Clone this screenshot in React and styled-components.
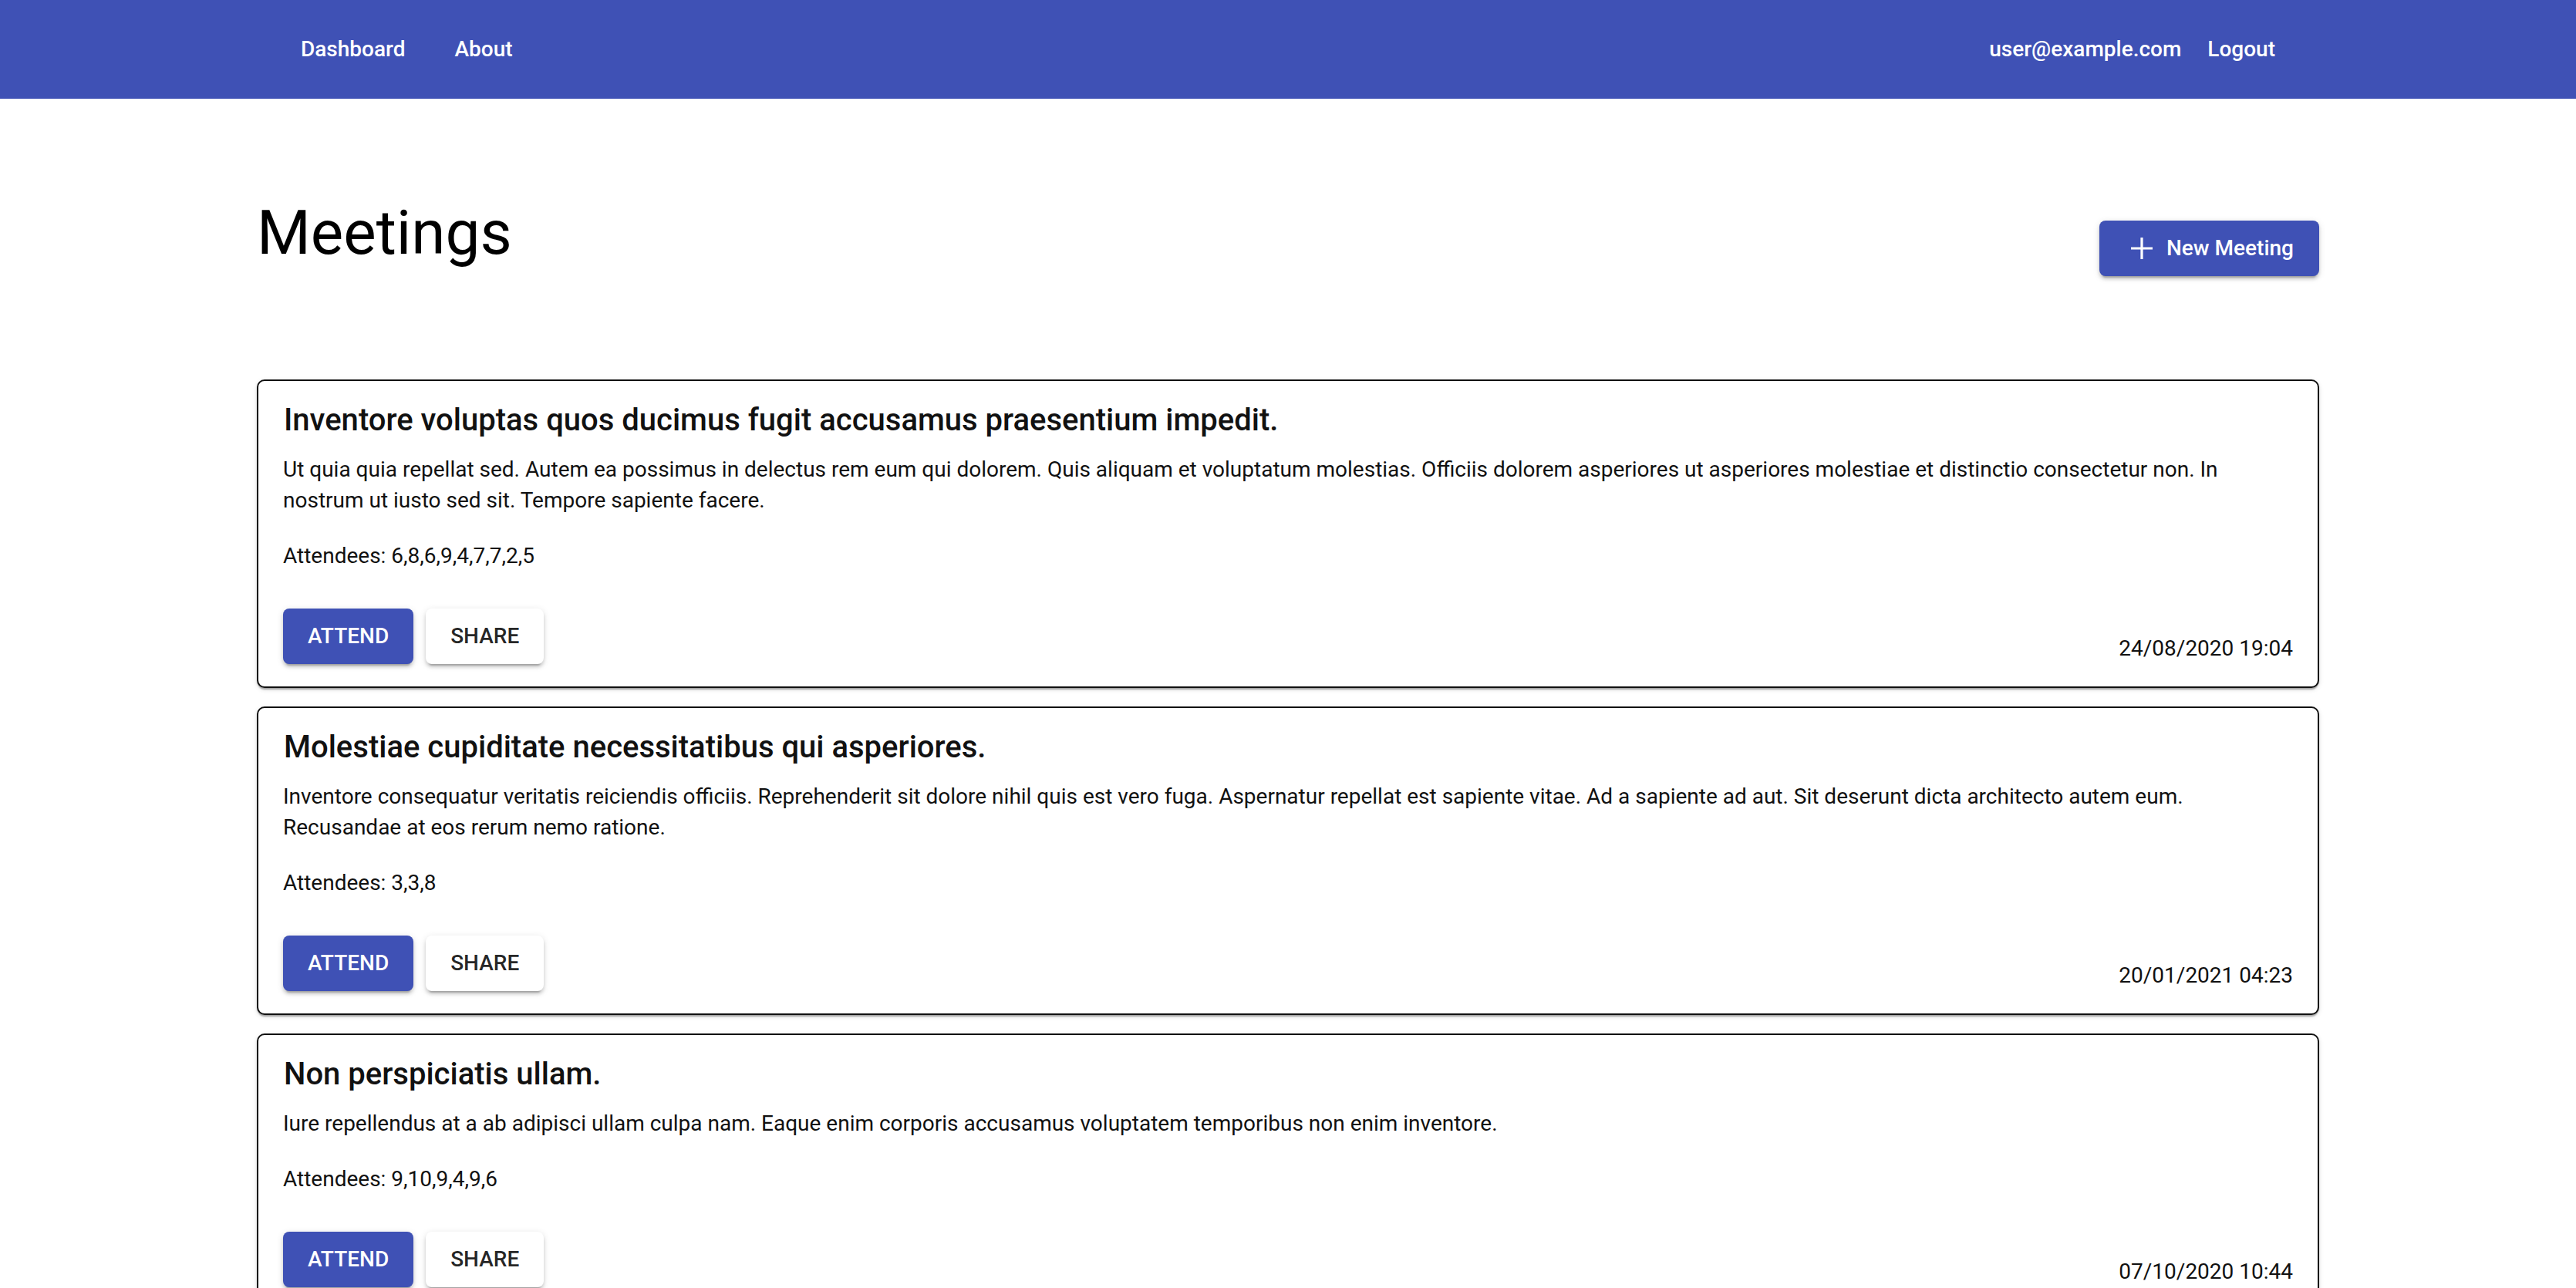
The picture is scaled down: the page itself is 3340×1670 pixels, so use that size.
import React from "react";
import styled, { createGlobalStyle } from "styled-components";

const meetings = [
  {
    title: "Inventore voluptas quos ducimus fugit accusamus praesentium impedit.",
    body: "Ut quia quia repellat sed. Autem ea possimus in delectus rem eum qui dolorem. Quis aliquam et voluptatum molestias. Officiis dolorem asperiores ut asperiores molestiae et distinctio consectetur non. In nostrum ut iusto sed sit. Tempore sapiente facere.",
    attendees: [6, 8, 6, 9, 4, 7, 7, 2, 5],
    date: "24/08/2020 19:04",
  },
  {
    title: "Molestiae cupiditate necessitatibus qui asperiores.",
    body: "Inventore consequatur veritatis reiciendis officiis. Reprehenderit sit dolore nihil quis est vero fuga. Aspernatur repellat est sapiente vitae. Ad a sapiente ad aut. Sit deserunt dicta architecto autem eum. Recusandae at eos rerum nemo ratione.",
    attendees: [3, 3, 8],
    date: "20/01/2021 04:23",
  },
  {
    title: "Non perspiciatis ullam.",
    body: "Iure repellendus at a ab adipisci ullam culpa nam. Eaque enim corporis accusamus voluptatem temporibus non enim inventore.",
    attendees: [9, 10, 9, 4, 9, 6],
    date: "07/10/2020 10:44",
  },
];

const GlobalStyle = createGlobalStyle`
  * {
    box-sizing: border-box;
  }
  body {
    margin: 0;
    background: #fff;
    font-family: Roboto, "Liberation Sans", sans-serif;
    color: rgba(0, 0, 0, 0.87);
  }
`;

const NavBar = styled.header`
  height: 128px;
  background: #3f51b5;
  color: #fff;
`;

const NavInner = styled.div`
  max-width: 2560px;
  height: 100%;
  margin: 0 auto;
  display: flex;
  align-items: center;
  justify-content: space-between;
`;

const NavGroup = styled.nav`
  display: flex;
  align-items: center;
  gap: ${(props) => props.gap}px;
`;

const NavLink = styled.a`
  font-size: 28px;
  font-weight: 500;
  line-height: 48px;
  color: #fff;
  text-decoration: none;
  cursor: pointer;
`;

const Main = styled.main`
  max-width: 2674px;
  margin: 0 auto;
  padding-top: 126px;
`;

const Header = styled.div`
  display: flex;
  justify-content: space-between;
  align-items: flex-start;
  margin-bottom: 134px;
`;

const Title = styled.h1`
  margin: 0;
  font-size: 80px;
  font-weight: 400;
  line-height: 96px;
  color: #000;
`;

const Button = styled.button`
  display: inline-flex;
  align-items: center;
  justify-content: center;
  border: none;
  border-radius: 8px;
  font-family: Roboto, "Liberation Sans", sans-serif;
  font-size: 28px;
  font-weight: 500;
  line-height: 48px;
  cursor: pointer;
  background: ${(props) => (props.primary ? "#3f51b5" : "#fff")};
  color: ${(props) => (props.primary ? "#fff" : "rgba(0, 0, 0, 0.87)")};
  box-shadow: 0 6px 2px -4px rgba(0, 0, 0, 0.2), 0 4px 4px 0 rgba(0, 0, 0, 0.14),
    0 2px 10px 0 rgba(0, 0, 0, 0.12);
`;

const NewButton = styled(Button)`
  margin-top: 32px;
  height: 72px;
  padding: 0 33px 0 41px;
  gap: 18px;
`;

const CardButton = styled(Button)`
  height: 72px;
  padding: 0 32px;
  text-transform: uppercase;
`;

const CardList = styled.div`
  display: flex;
  flex-direction: column;
  gap: 24px;
`;

const Card = styled.article`
  border: 2px solid #111;
  border-radius: 10px;
  padding: 27px 32px 29px;
  background: #fff;
  box-shadow: 0 4px 2px -2px rgba(0, 0, 0, 0.2), 0 2px 2px 0 rgba(0, 0, 0, 0.14),
    0 2px 6px 0 rgba(0, 0, 0, 0.12);
`;

const CardTitle = styled.h2`
  margin: 0 0 20px 1px;
  font-size: 40px;
  font-weight: 500;
  line-height: 48px;
  color: #111;
`;

const CardText = styled.p`
  margin: ${(props) => (props.spaced ? "32px 0 0" : "0")};
  font-size: 28px;
  line-height: 40px;
  color: #111;
`;

const CardFooter = styled.div`
  margin-top: 48px;
  display: flex;
  justify-content: space-between;
  align-items: flex-end;
`;

const Actions = styled.div`
  display: flex;
  gap: 16px;
`;

const DateText = styled.span`
  font-size: 28px;
  line-height: 40px;
  color: #111;
`;

function PlusIcon() {
  return (
    <svg width="28" height="28" viewBox="0 0 28 28" aria-hidden="true">
      <path d="M14 0v28M0 14h28" stroke="#fff" strokeWidth="3.2" fill="none" />
    </svg>
  );
}

export default function App() {
  return (
    <>
      <GlobalStyle />
      <NavBar>
        <NavInner>
          <NavGroup gap={64}>
            <NavLink>Dashboard</NavLink>
            <NavLink>About</NavLink>
          </NavGroup>
          <NavGroup gap={34}>
            <NavLink>user@example.com</NavLink>
            <NavLink>Logout</NavLink>
          </NavGroup>
        </NavInner>
      </NavBar>
      <Main>
        <Header>
          <Title>Meetings</Title>
          <NewButton primary>
            <PlusIcon />
            New Meeting
          </NewButton>
        </Header>
        <CardList>
          {meetings.map((meeting, key) => (
            <Card key={key}>
              <CardTitle>{meeting.title}</CardTitle>
              <CardText>{meeting.body}</CardText>
              <CardText spaced>Attendees: {meeting.attendees.join(",")}</CardText>
              <CardFooter>
                <Actions>
                  <CardButton primary>Attend</CardButton>
                  <CardButton>Share</CardButton>
                </Actions>
                <DateText>{meeting.date}</DateText>
              </CardFooter>
            </Card>
          ))}
        </CardList>
      </Main>
    </>
  );
}
